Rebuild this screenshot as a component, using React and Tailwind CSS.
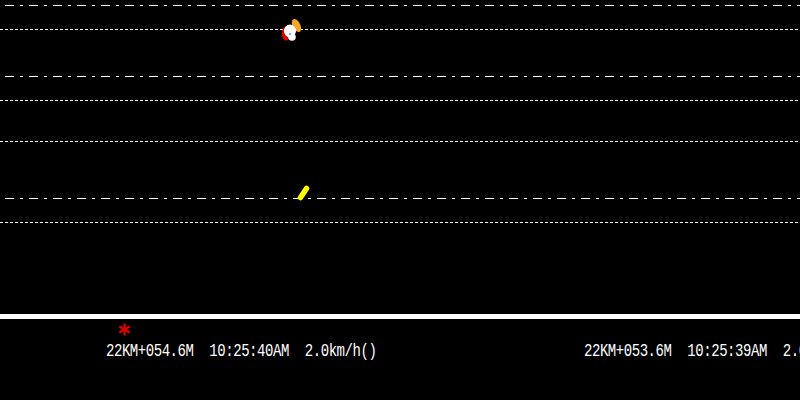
import React from 'react';

// lane markers: dash-dot edge lines and dashed lane dividers
const dashDot =
  'bg-[repeating-linear-gradient(90deg,transparent_0_5px,#ffffff_5px_14px,transparent_14px_20px,#ffffff_20px_23px,transparent_23px_24px)]';
const dashed =
  'bg-[repeating-linear-gradient(90deg,#ffffff_0_3px,transparent_3px_5px)]';

const records = [
  '22KM+054.6M  10:25:40AM  2.0km/h()',
  '22KM+053.6M  10:25:39AM  2.0km/h()',
];

function Markers() {
  return (
    <svg className="absolute inset-0" width="800" height="314" viewBox="0 0 800 314">
      {/* vehicle cluster near lane 1 */}
      <ellipse cx="296.5" cy="25.5" rx="3.8" ry="7" fill="#f5a623" transform="rotate(-28 296.5 25.5)" />
      <ellipse cx="286" cy="33.5" rx="4.2" ry="7" fill="#e00000" />
      <ellipse cx="290" cy="31" rx="6" ry="6.5" fill="#ffffff" />
      <circle cx="292" cy="37" r="3.8" fill="#ffffff" />
      <rect x="289" y="33" width="2" height="2" fill="#3fc7e0" />
      {/* vehicle near lane 3 */}
      <line x1="300.5" y1="197.5" x2="306.5" y2="188.5" stroke="#ffff00" strokeWidth="5.5" strokeLinecap="round" />
    </svg>
  );
}

function Asterisk() {
  return (
    <svg width="13" height="13" viewBox="0 0 13 13">
      <g stroke="#e00000" strokeWidth="2.2" strokeLinecap="butt">
        <line x1="6.5" y1="0.5" x2="6.5" y2="12.5" />
        <line x1="1.3" y1="3.5" x2="11.7" y2="9.5" />
        <line x1="1.3" y1="9.5" x2="11.7" y2="3.5" />
      </g>
    </svg>
  );
}

export default function App() {
  return (
    <div className="w-[800px] h-[400px] bg-black overflow-hidden">
      <div className="relative h-[314px] flex flex-col">
        <div className={`mt-[5px] h-px ${dashDot}`}></div>
        <div className={`mt-[23px] h-px ${dashed}`}></div>
        <div className={`mt-[46px] h-px ${dashDot}`}></div>
        <div className={`mt-[23px] h-px ${dashed}`}></div>
        <div className={`mt-[40px] h-px ${dashed}`}></div>
        <div className={`mt-[56px] h-px ${dashDot}`}></div>
        <div className={`mt-[23px] h-px ${dashed}`}></div>
        <Markers />
      </div>

      <div className="h-[5px] bg-white"></div>

      <div className="h-[81px]">
        <div className="pl-[118px] pt-[4px]">
          <Asterisk />
        </div>
        <div className="mt-[7px] flex pl-[106px]">
          {records.map((r, i) => (
            <div
              key={i}
              className="w-[478px] shrink-0 whitespace-pre text-white text-[14px] leading-[16px] tracking-[-0.45px] font-['Liberation_Mono',monospace] scale-y-125"
            >
              {r}
            </div>
          ))}
        </div>
      </div>
    </div>
  );
}
